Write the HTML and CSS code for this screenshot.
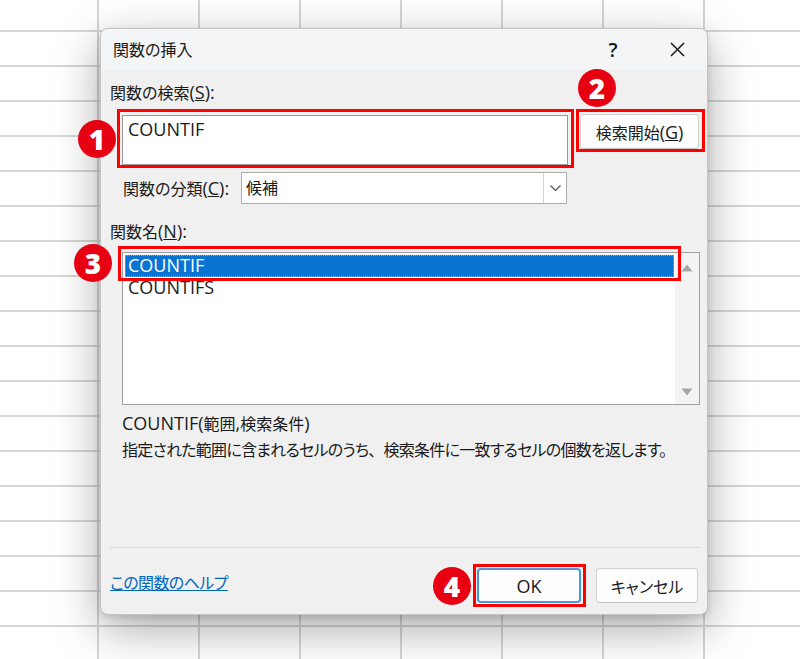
FILE: index.html
```html
<!DOCTYPE html>
<html lang="ja">
<head>
<meta charset="utf-8">
<title>関数の挿入</title>
<link rel="stylesheet" href="styles.css">
</head>
<body>
<div class="sheet">
  <div class="dialog">
    <div class="titlebar">
      <span class="title">関数の挿入</span>
      <span class="tb-btn help">?</span>
      <span class="tb-btn close"><svg width="15" height="15" viewBox="0 0 15 15"><path d="M1 1L14 14M14 1L1 14" stroke="#1a1a1a" stroke-width="1.5" fill="none"/></svg></span>
    </div>
    <div class="content">
      <div class="label">関数の検索<span class="lat">(<u>S</u>):</span></div>
      <div class="search-row">
        <div class="textbox"><span class="lat">COUNTIF</span></div>
        <button class="btn go">検索開始<span class="lat">(<u>G</u>)</span></button>
      </div>
      <div class="cat-row">
        <span class="cat-label">関数の分類<span class="lat">(<u>C</u>):</span></span>
        <div class="select">
          <span class="sel-val">候補</span>
          <span class="sel-arrow"><svg width="11" height="6" viewBox="0 0 11 6"><path d="M0.5 0.5L5.5 5.5L10.5 0.5" fill="none" stroke="#555" stroke-width="1.2"/></svg></span>
        </div>
      </div>
      <div class="label name-label">関数名<span class="lat">(<u>N</u>):</span></div>
      <div class="listbox">
        <div class="items">
          <div class="item selected lat">COUNTIF</div>
          <div class="item lat">COUNTIFS</div>
        </div>
        <div class="scrollbar">
          <svg width="12" height="8" viewBox="0 0 12 8"><path d="M6 0.5L11.5 7.5H0.5Z" fill="#a6a6a6"/></svg>
          <svg width="12" height="8" viewBox="0 0 12 8"><path d="M6 7.5L11.5 0.5H0.5Z" fill="#a6a6a6"/></svg>
        </div>
      </div>
      <div class="sig"><span class="lat">COUNTIF(</span>範囲<span class="lat">,</span>検索条件<span class="lat">)</span></div>
      <div class="desc">指定された範囲に含まれるセルのうち<span class="fullw">、</span>検索条件に一致するセルの個数を返します。</div>
      <div class="footer">
        <div class="sep"></div>
        <div class="foot-row">
          <a class="help-link">この関数のヘルプ</a>
          <button class="btn ok">OK</button>
          <button class="btn cancel">キャンセル</button>
        </div>
      </div>
    </div>
  </div>

  <div class="hl hl-search"></div>
  <div class="hl hl-go"></div>
  <div class="hl hl-row"></div>
  <div class="hl hl-ok"></div>

  <div class="badge badge-1">1</div>
  <div class="badge badge-2">2</div>
  <div class="badge badge-3">3</div>
  <div class="badge badge-4">4</div>
</div>
</body>
</html>
```

FILE: styles.css
```css
* { box-sizing: border-box; }
html, body { margin: 0; padding: 0; }
body {
  width: 800px;
  height: 659px;
  overflow: hidden;
  font-family: "Open Sans", "Noto Sans CJK JP", sans-serif;
  font-size: 16px;
  color: #1a1a1a;
  font-feature-settings: "palt";
}
.sheet {
  position: relative;
  width: 800px;
  height: 659px;
  background-color: #fff;
  background-image:
    linear-gradient(to right, #d6d6d6 2px, transparent 2px),
    linear-gradient(to bottom, #d6d6d6 2px, transparent 2px);
  background-size: 101px 35px;
  background-position: -4px -5px;
}
.lat { font-size: 18px; letter-spacing: 0; }

.dialog {
  position: absolute;
  left: 100px;
  top: 28px;
  width: 608px;
  height: 587px;
  border: 1px solid #c4c4c4;
  border-radius: 8px;
  background: #f0f0f0;
  box-shadow: 0 14px 46px rgba(0,0,0,.34), 0 2px 6px rgba(0,0,0,.12);
  display: flex;
  flex-direction: column;
  overflow: hidden;
}
.titlebar {
  height: 41px;
  flex: none;
  display: flex;
  align-items: center;
  padding-left: 12px;
  background: #f4f5f7;
}
.title { flex: 1; line-height: 22px; }
.tb-btn {
  width: 46px;
  height: 41px;
  display: flex;
  align-items: center;
  justify-content: center;
}
.help { margin-right: 18px; font-size: 20px; font-weight: 600; }
.close { margin-right: 7px; }

.content {
  flex: 1;
  display: flex;
  flex-direction: column;
  padding: 0 7px 11px 9px;
}
.label { line-height: 22px; margin-top: 11px; }
.name-label { margin-top: 16px; }

.search-row { display: flex; align-items: flex-start; margin-top: 10px; }
.textbox {
  margin-left: 12px;
  margin-top: 1px;
  width: 446px;
  height: 50px;
  background: #fff;
  border: 1px solid #9a9a9a;
  padding: 2px 5px;
  line-height: 22px;
}
.btn {
  height: 35px;
  background: #fdfdfd;
  border: 1px solid #d1d1d1;
  border-bottom-color: #c2c2c2;
  border-radius: 4px;
  font-family: inherit;
  font-size: 16px;
  color: #1a1a1a;
  padding: 0;
  font-feature-settings: "palt";
}
.go { margin-left: 12px; width: 119px; }

.cat-row { display: flex; align-items: center; margin-top: 7px; }
.cat-label { margin-left: 13px; width: 118px; line-height: 22px; }
.select {
  width: 326px;
  height: 32px;
  background: #fff;
  border: 1px solid #adadad;
  display: flex;
}
.sel-val { flex: 1; padding-left: 4px; line-height: 30px; }
.sel-arrow {
  width: 23px;
  border-left: 1px solid #d4d4d4;
  display: flex;
  align-items: center;
  justify-content: center;
}

.listbox {
  margin-top: 9px;
  margin-left: 12px;
  width: 578px;
  height: 153px;
  border: 1px solid #a0a0a0;
  background: #fff;
  display: flex;
}
.items { flex: 1; padding: 2px 1px 0 2px; }
.item { height: 22px; line-height: 21px; padding-left: 3px; }
.item.selected {
  background: #0a74d4;
  color: #fff;
  outline: 1px dotted #d89a4a;
  outline-offset: -1px;
}
.scrollbar {
  width: 24px;
  background: #f3f3f3;
  display: flex;
  flex-direction: column;
  align-items: center;
  justify-content: space-between;
  padding: 11px 0 8px;
}

.sig { margin-left: 12px; margin-top: 7px; line-height: 22px; }
.desc { margin-left: 12px; margin-top: 4px; line-height: 22px; letter-spacing: -0.75px; white-space: nowrap; }
.fullw { font-feature-settings: normal; }

.footer { margin-top: auto; }
.sep { height: 1px; background: #d9d9d9; }
.foot-row { display: flex; align-items: center; margin-top: 20px; height: 35px; }
.help-link {
  margin-right: auto;
  color: #0067c0;
  text-decoration: underline;
  line-height: 22px;
  padding-bottom: 6px;
  letter-spacing: -0.6px;
}
.ok { width: 104px; border: 2px solid #4b96dc; font-size: 18px; font-family: "Open Sans", sans-serif; }
.cancel { width: 102px; margin-left: 15px; margin-right: 2px; }

.hl { position: absolute; border: 3px solid #ff0000; }
.hl-search { left: 117px; top: 109px; width: 457px; height: 59px; }
.hl-go { left: 576px; top: 109px; width: 129px; height: 43px; }
.hl-row { left: 118px; top: 246px; width: 563px; height: 35px; }
.hl-ok { left: 473px; top: 564px; width: 113px; height: 43px; }

.badge {
  position: absolute;
  width: 38px;
  height: 38px;
  border-radius: 50%;
  background: #e60012;
  color: #fff;
  font-family: "Open Sans", sans-serif;
  font-weight: 800;
  font-size: 28px;
  line-height: 38px;
  text-align: center;
}
.badge-1 { left: 78px; top: 120px; }
.badge-2 { left: 578px; top: 69px; }
.badge-3 { left: 74px; top: 244px; }
.badge-4 { left: 433px; top: 567px; }
```
